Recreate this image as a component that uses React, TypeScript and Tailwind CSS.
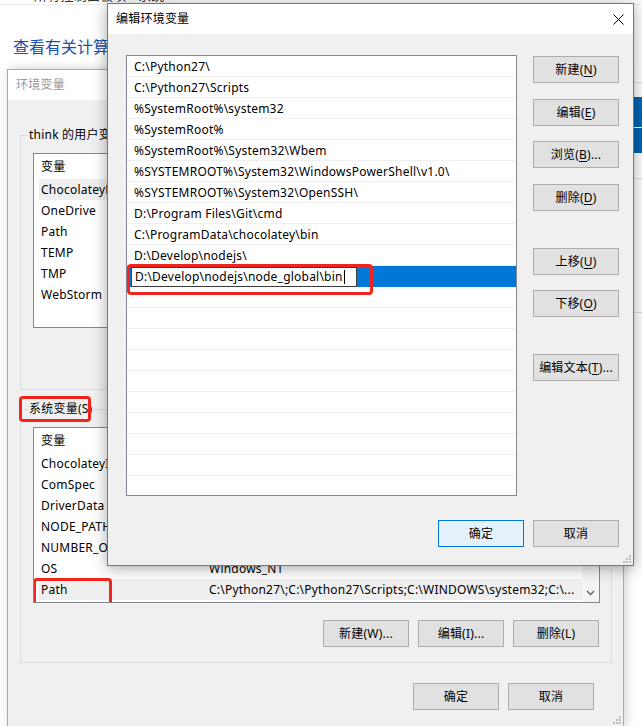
import clsx from 'clsx'
import type { ReactNode } from 'react'

const font = "font-['Noto_Sans','Noto_Sans_CJK_SC',sans-serif]"

const paths = [
  'C:\\Python27\\',
  'C:\\Python27\\Scripts',
  '%SystemRoot%\\system32',
  '%SystemRoot%',
  '%SystemRoot%\\System32\\Wbem',
  '%SYSTEMROOT%\\System32\\WindowsPowerShell\\v1.0\\',
  '%SYSTEMROOT%\\System32\\OpenSSH\\',
  'D:\\Program Files\\Git\\cmd',
  'C:\\ProgramData\\chocolatey\\bin',
  'D:\\Develop\\nodejs\\',
]

const userVars = [
  ['ChocolateyLastPathUpdate', '132219816434508063'],
  ['OneDrive', 'C:\\Users\\think\\OneDrive'],
  ['Path', 'C:\\Users\\think\\AppData\\Roaming\\npm'],
  ['TEMP', 'C:\\Users\\think\\AppData\\Local\\Temp'],
  ['TMP', 'C:\\Users\\think\\AppData\\Local\\Temp'],
  ['WebStorm', 'D:\\Program Files\\JetBrains\\WebStorm\\bin;'],
]

const sysVars = [
  ['ChocolateyInstall', 'C:\\ProgramData\\chocolatey'],
  ['ComSpec', 'C:\\WINDOWS\\system32\\cmd.exe'],
  ['DriverData', 'C:\\Windows\\System32\\Drivers\\DriverData'],
  ['NODE_PATH', 'D:\\Develop\\nodejs\\node_global\\node_modules'],
  ['NUMBER_OF_PROCESSORS', '8'],
  ['OS', 'Windows_NT'],
  ['Path', 'C:\\Python27\\;C:\\Python27\\Scripts;C:\\WINDOWS\\system32;C:\\...'],
]

function Btn({ children, primary, className }: { children: ReactNode; primary?: boolean; className?: string }) {
  return (
    <button
      className={clsx(
        'flex h-[27px] w-[86px] shrink-0 items-center justify-center border text-[12px] leading-none text-black',
        primary ? 'border-[#0078d7] bg-[#e5f1fb]' : 'border-[#adadad] bg-[#e1e1e1]',
        className
      )}
    >
      {children}
    </button>
  )
}

function Grip() {
  return (
    <svg width="10" height="10" viewBox="0 0 10 10" className="absolute bottom-[1px] right-[1px]">
      {[[7, 1], [4, 4], [7, 4], [1, 7], [4, 7], [7, 7]].map(([x, y]) => (
        <rect key={`${x}-${y}`} x={x} y={y} width="2" height="2" fill="#bcbcbc" />
      ))}
    </svg>
  )
}

function VarList({ rows, selected, boxed, height, scroll }: { rows: string[][]; selected: number; boxed?: number; height: string; scroll?: boolean }) {
  return (
    <div className={clsx('relative flex w-[567px] overflow-hidden border border-[#828790] bg-white', height)}>
      <div className="flex-1 overflow-hidden pl-[5px]">
        <div className="flex h-[25px] items-center">
          <span className="w-[170px] pl-[2px]">变量</span>
          <span>值</span>
        </div>
        {rows.map(([k, v], i) => (
          <div key={k} className={clsx('relative flex h-[21px] items-start whitespace-nowrap pt-[3px] leading-[16px]', i === selected && 'bg-[#efefef]')}>
            <span className="w-[170px] shrink-0 overflow-hidden pl-[2px]">{k}</span>
            <span className="overflow-hidden">{v}</span>
            {i === boxed && (
              <span className="absolute -left-[6px] -top-[1px] h-[28px] w-[79px] rounded-[4px] border-[3px] border-[#f0261e]" />
            )}
          </div>
        ))}
      </div>
      {scroll && (
        <div className="flex w-[17px] shrink-0 flex-col justify-end bg-[#f4f4f4] pb-[6px]">
          <svg width="17" height="6" viewBox="0 0 17 6">
            <path d="M5 1 L8.5 4.5 L12 1" fill="none" stroke="#606060" strokeWidth="1.3" />
          </svg>
        </div>
      )}
    </div>
  )
}

export default function App() {
  return (
    <div className={clsx('relative h-[726px] w-[642px] overflow-hidden bg-white text-[12px] tracking-[0.22px] text-black', font)}>
      {/* 背景的系统窗口 */}
      <div className="-mt-[13px] h-[18px] border-b border-[#ececec] pl-[34px] text-[13px] leading-[16px] text-[#333]">
        所有控制面板项 › 系统
      </div>
      <div className="pl-[13px] pt-[31px] text-[16px] leading-[22px] tracking-normal text-[#1c4fa8]">查看有关计算机的基本信息</div>

      <div className="absolute left-[622px] top-[82px] h-[1px] w-[20px] bg-[#dcdcdc]" />
      <div className="absolute left-[622px] top-[178px] h-[1px] w-[20px] bg-[#dcdcdc]" />
      <div className="absolute left-[622px] top-[312px] h-[1px] w-[20px] bg-[#dcdcdc]" />
      <div className="absolute left-[630px] top-[97px] h-[30px] w-[12px] bg-[#0063b1]" />
      <div className="absolute left-[630px] top-[128px] h-[25px] w-[12px] bg-[#0063b1]" />

      {/* 环境变量 */}
      <div className="absolute left-[7px] top-[69px] h-[658px] w-[617px] border border-[#aaaaaa] bg-[#f0f0f0] shadow-[2px_0_10px_rgba(0,0,0,0.18)]">
        <div className="flex h-[30px] items-center bg-white pl-[8px] text-[#9a9a9a]">环境变量</div>
        <div className="pl-[12px] pr-[11px] pt-[27px]">
          <fieldset className="h-[263px] border border-[#dcdcdc]">
            <legend className="ml-[7px] px-[1px] leading-[16px]">think 的用户变量(U)</legend>
            <div className="pl-[12px] pt-[10px]">
              <VarList rows={userVars} selected={0} height="h-[175px]" />
              <div className="mt-[16px] flex w-[566px] justify-end gap-[9px]">
                <Btn>新建(N)...</Btn>
                <Btn>编辑(E)...</Btn>
                <Btn>删除(D)</Btn>
              </div>
            </div>
          </fieldset>

          <fieldset className="mt-[11px] h-[262px] border border-[#dcdcdc]">
            <legend className="relative ml-[7px] px-[1px] leading-[16px]">
              系统变量(S)
              <span className="absolute -left-[9px] -top-[5px] h-[26px] w-[72px] rounded-[4px] border-[3px] border-[#f0261e]" />
            </legend>
            <div className="pl-[12px] pt-[10px]">
              <VarList rows={sysVars} selected={6} boxed={6} height="h-[176px]" scroll />
              <div className="mt-[17px] flex w-[566px] justify-end gap-[9px]">
                <Btn>新建(W)...</Btn>
                <Btn>编辑(I)...</Btn>
                <Btn>删除(L)</Btn>
              </div>
            </div>
          </fieldset>

          <div className="mt-[20px] flex justify-end gap-[9px] pr-[18px]">
            <Btn>确定</Btn>
            <Btn>取消</Btn>
          </div>
        </div>
        <Grip />
      </div>

      {/* 编辑环境变量 */}
      <div className="absolute left-[107px] top-[3px] flex h-[563px] w-[527px] flex-col border border-[#777777] bg-[#f0f0f0] shadow-[0_2px_14px_rgba(0,0,0,0.35)]">
        <div className="flex h-[30px] shrink-0 items-center justify-between bg-white pl-[8px] pr-[9px]">
          <span>编辑环境变量</span>
          <svg width="11" height="11" viewBox="0 0 11 11">
            <path d="M0.5 0.5 L10.5 10.5 M10.5 0.5 L0.5 10.5" stroke="#000" strokeWidth="1" />
          </svg>
        </div>
        <div className="flex-1 pl-[18px] pr-[14px] pt-[21px]">
          <div className="flex gap-[16px]">
            <div className="h-[441px] w-[391px] overflow-hidden border border-[#828790] bg-white">
              {paths.map((p) => (
                <div key={p} className="h-[21px] whitespace-nowrap border-b border-[#f0f0f0] pl-[7px] pt-[3px] leading-[16px]">
                  {p}
                </div>
              ))}
              <div className="relative flex h-[21px] items-center bg-[#0078d7] pl-[4px]">
                <div className="flex h-[20px] w-[226px] items-center border border-[#3c3c3c] bg-white pl-[3px] pt-[1px]">
                  D:\Develop\nodejs\node_global\bin
                  <span className="ml-[1px] h-[14px] w-[1px] bg-black" />
                </div>
                <span className="absolute -top-[2px] left-0 h-[31px] w-[246px] rounded-[4px] border-[3px] border-[#f0261e]" />
              </div>
              {Array.from({ length: 10 }, (_, i) => (
                <div key={i} className="h-[21px] border-b border-[#f0f0f0]" />
              ))}
            </div>
            <div className="flex w-[86px] flex-col pt-[1px]">
              <Btn>
                新建(<u className="underline-offset-2">N</u>)
              </Btn>
              <Btn className="mt-[16px]">
                编辑(<u className="underline-offset-2">E</u>)
              </Btn>
              <Btn className="mt-[15px]">
                浏览(<u className="underline-offset-2">B</u>)...
              </Btn>
              <Btn className="mt-[16px]">
                删除(<u className="underline-offset-2">D</u>)
              </Btn>
              <Btn className="mt-[37px]">
                上移(<u className="underline-offset-2">U</u>)
              </Btn>
              <Btn className="mt-[15px]">
                下移(<u className="underline-offset-2">O</u>)
              </Btn>
              <Btn className="mt-[37px]">
                编辑文本(<u className="underline-offset-2">T</u>)...
              </Btn>
            </div>
          </div>
          <div className="mt-[24px] flex justify-end gap-[9px]">
            <Btn primary>确定</Btn>
            <Btn>取消</Btn>
          </div>
        </div>
        <Grip />
      </div>
    </div>
  )
}
